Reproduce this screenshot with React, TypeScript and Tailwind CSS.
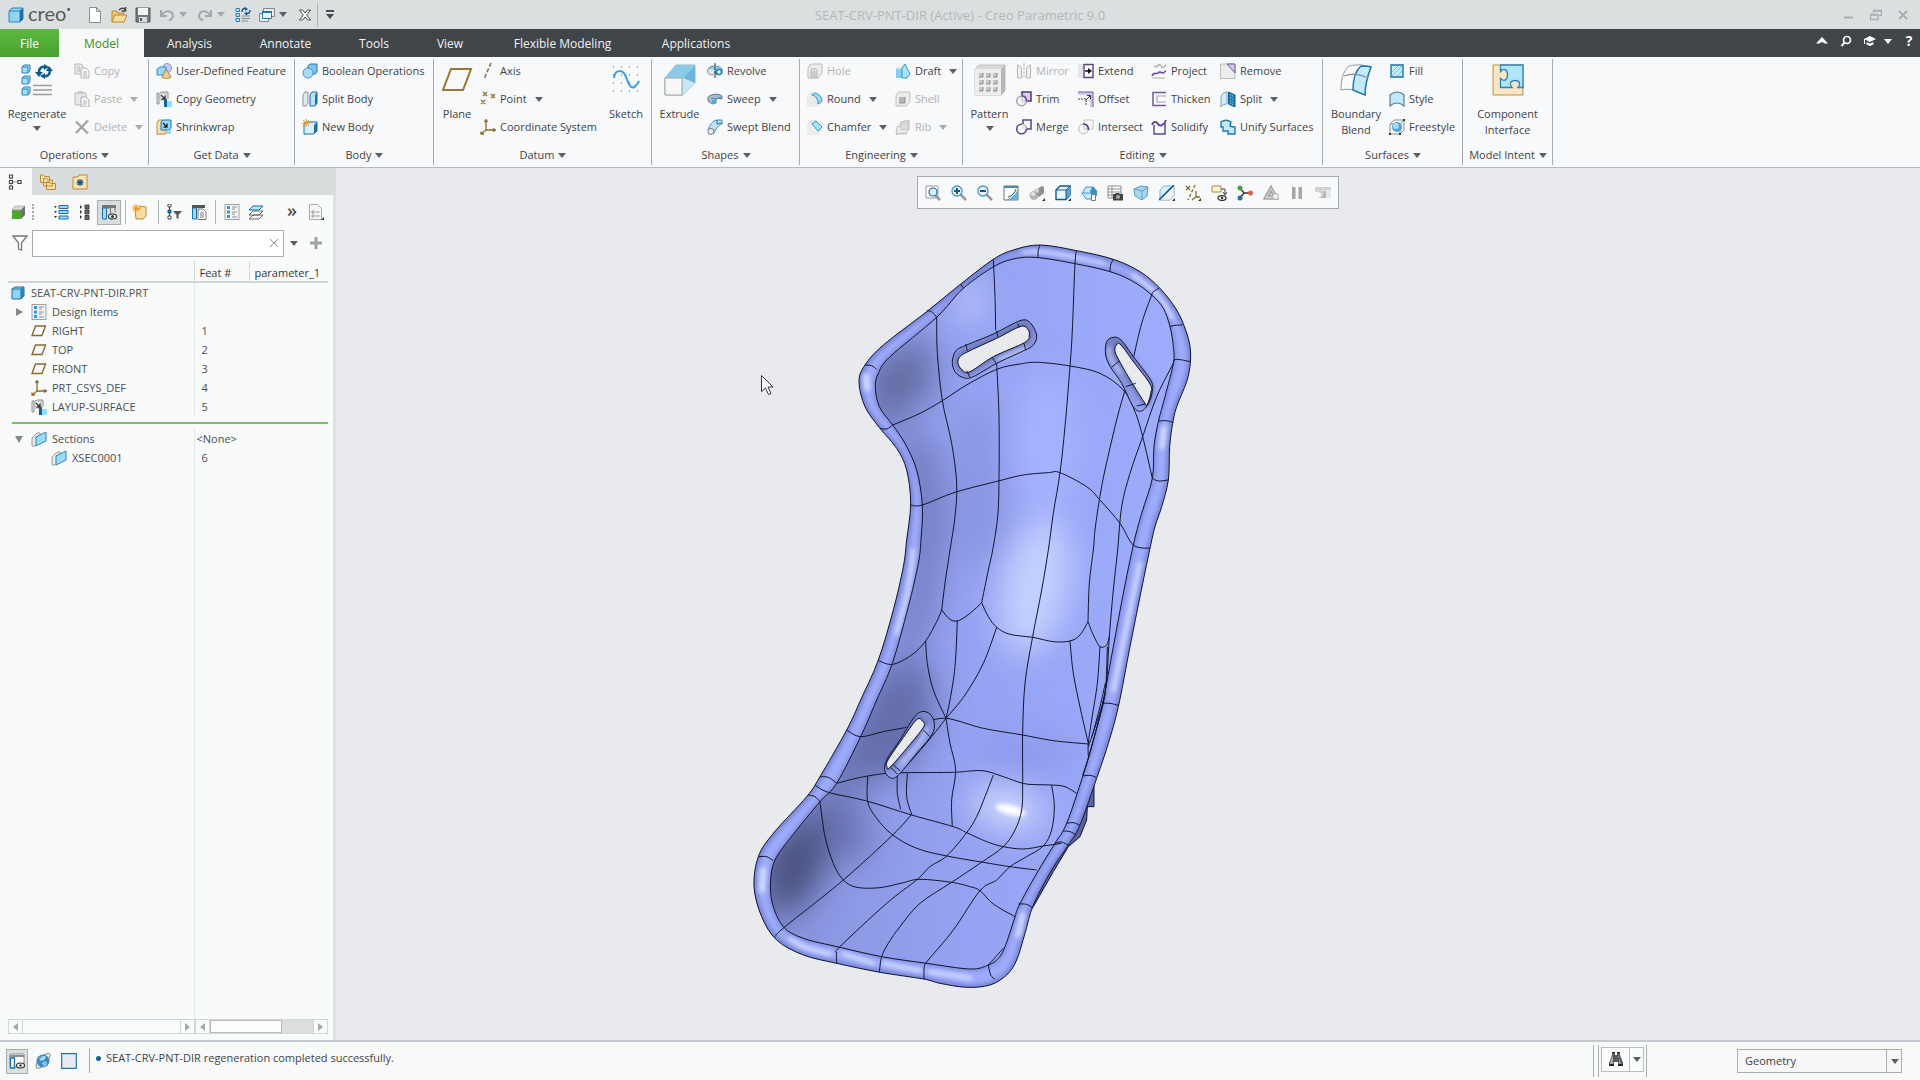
import { ReactNode, useState } from "react";
import clsx from "clsx";

/* ---------- icons, 16x16 grid ---------- */

const icons: Record<string, ReactNode> = {
  logo: (
    <>
      <path d="M4 1h11v11l-3 3H1V4z" fill="#8fd3f5" stroke="#2f83b5" />
      <path d="M1 4h11v11M12 4l3-3" fill="none" stroke="#2f83b5" />
      <path d="M12 4l3-3v11l-3 3z" fill="#1d6fa5" />
    </>
  ),
  newFile: (
    <path d="M2.500.5h7l4 4v11h-11zM9.500.5v4h4" fill="#fff" stroke="#8b8f92" />
  ),
  open: (
    <>
      <path d="M1 15V4h5l1 2h6v3" fill="#f0c56c" stroke="#b98a3a" />
      <path d="M1 15l3-7h12l-3 7z" fill="#fbdc9c" stroke="#b98a3a" />
      <path d="M8 3c2-2 4-2 6-1M14.500 0v4h-4" fill="none" stroke="#444" strokeWidth="1.500" />
    </>
  ),
  save: (
    <>
      <path d="M1 1h14v14H1z" fill="#77797b" stroke="#55585a" />
      <path d="M3 1h10v7H3z" fill="#f4f4f4" />
      <path d="M4 10h8v5H4z" fill="#d9dadb" />
      <path d="M5 11h2v3H5z" fill="#55585a" />
    </>
  ),
  undo: (
    <path d="M2 3v6h6M2.500 8.500C5 4 10 3 12.500 5.500s2 6-2.500 8" fill="none" stroke="#a3a7a9" strokeWidth="2" />
  ),
  redo: (
    <path d="M14 3v6H8M13.500 8.500C11 4 6 3 3.500 5.500s-2 6 2.500 8" fill="none" stroke="#a3a7a9" strokeWidth="2" />
  ),
  regen: (
    <>
      <path d="M1 1.500h3.500v3H1zM1 6.500h3.500v3H1zM1 11.500h3.500v3H1z" fill="#aee0f8" stroke="#2f83b5" />
      <path d="M6.500 11.500H15M6.500 14H13M6.500 9H15" stroke="#8a8d90" />
      <path d="M7 5c0-3 2-4 4-3.500M15 3c0 3-2 4-4 3.500" fill="none" stroke="#125a8c" strokeWidth="1.500" />
      <path d="M10 0l3 2-3 2zM12 4.500l-3 2 3 2z" fill="#125a8c" />
    </>
  ),
  windows: (
    <>
      <path d="M4.500 1.500h11v8h-11zM.5 6.500h9v8h-9z" fill="#e8eef2" stroke="#7f8990" />
      <path d="M3.500 4.500h9v7h-9z" fill="#e6f6fd" stroke="#2277ad" />
      <path d="M3 4h10v2H3z" fill="#2277ad" />
    </>
  ),
  closeWin: (
    <path d="M2.500 3h3L8 6l2.500-3h3L9.700 8l3.800 5h-3L8 10l-2.500 3h-3l3.800-5z" fill="#fff" stroke="#4a4d50" />
  ),
  copy: (
    <>
      <path d="M1 1h6l2 2v8H1z" fill="#e9e9ea" stroke="#b5b7b9" />
      <path d="M7 5h5l3 3v7H7z" fill="#f4f4f5" stroke="#b5b7b9" />
      <path d="M3 4h3M3 6h3M3 8h3M9 9h4M9 11h4M9 13h4" stroke="#b5b7b9" />
    </>
  ),
  paste: (
    <>
      <path d="M1 2h11v12H1z" fill="#e9e9ea" stroke="#b5b7b9" />
      <path d="M4 0h5v3H4z" fill="#c6c8ca" />
      <path d="M7 6h5l3 3v7H7z" fill="#f7f7f8" stroke="#aaacae" />
      <path d="M9 10h4M9 12h4M9 14h3" stroke="#b5b7b9" />
    </>
  ),
  del: <path d="M2 2.500l12 12M14 1.500L2 14" stroke="#a2a4a6" strokeWidth="2.400" />,
  udf: (
    <>
      <circle cx="11" cy="5" r="4.500" fill="#c7cdf5" stroke="#8790c9" />
      <path d="M1 6l3-2h6v8H1z" fill="#9ad8f7" stroke="#3b90c0" />
      <path d="M10 6l5 8c-2 2-7 2-9 0z" fill="#eecb95" stroke="#a9813f" />
    </>
  ),
  copyGeom: (
    <>
      <path d="M1 13V2h2v11zM4 2l2-1h6v7" fill="#e9eaeb" stroke="#8c8f91" />
      <path d="M4 2h6v7H4z" fill="#f4f5f5" stroke="#b0b3b5" />
      <path d="M5 4l4 4M9 4.500V8H5.500" stroke="#333" strokeWidth="1.300" fill="none" />
      <path d="M8 10h8v6H8z" fill="#8fdcfb" />
      <path d="M8 8h3v8H8z" fill="#155f93" />
    </>
  ),
  shrinkwrap: (
    <>
      <path d="M1 15V3l2-2h4v14z" fill="#f7dfab" stroke="#c09546" />
      <path d="M1 15h9v-5" fill="#f7dfab" stroke="#c09546" />
      <path d="M5 3l2-2h8v8l-2 2H5z" fill="#9ad8f7" stroke="#2277ad" />
      <path d="M7 4l4 4M11 4.500V8H7.500" stroke="#222" strokeWidth="1.300" fill="none" />
      <path d="M11 11h4v4h-4z" fill="#8fdcfb" />
    </>
  ),
  boolean: (
    <>
      <path d="M6 3l2-2h7v8l-2 2H6z" fill="#7cc4ea" stroke="#2277ad" />
      <circle cx="6" cy="10" r="5" fill="#a9dcf5" stroke="#4a95bf" />
    </>
  ),
  splitBody: (
    <>
      <path d="M1 4l2-3h3v11l-2 3H1z" fill="#e3e7ea" stroke="#8c9499" />
      <path d="M8 4l2-3h5v11l-2 3H8z" fill="#b4e3fa" stroke="#1d6fa5" />
      <path d="M13 4l2-3v11l-2 3z" fill="#1d6fa5" />
    </>
  ),
  newBody: (
    <>
      <path d="M2 5l2-2h11v9l-3 3H2z" fill="#d9f1fc" stroke="#1d6fa5" />
      <path d="M12 6l3-3v9l-3 3z" fill="#1d6fa5" />
      <path d="M4 0v8M0 4h8M1 1l6 6M7 1L1 7" stroke="#f0920f" />
    </>
  ),
  axis: <path d="M11 0L4 16" stroke="#8a6a30" strokeWidth="1.500" strokeDasharray="4 2" />,
  point: (
    <path d="M3 1l4 4M7 1L3 5M11 3l4 4M15 3l-4 4M1 9l4 4M5 9l-4 4" stroke="#96753a" strokeWidth="1.500" />
  ),
  csys: (
    <path d="M6 1v10h9M6 11l-5 4M4.500 3L6 .5 7.500 3M13 9.500l2.500 1.500-2.500 1.500M1 12.500V15h3" fill="none" stroke="#8a6a30" strokeWidth="1.300" />
  ),
  revolve: (
    <>
      <ellipse cx="5" cy="8" rx="4.500" ry="4" fill="#e3e7ea" stroke="#8c9499" />
      <path d="M1 6c3-4 11-4 14 0v4c-3 2-5 2-7 1V7" fill="#8fcdee" stroke="#3b90c0" />
      <circle cx="12" cy="9" r="2.500" fill="#fff" stroke="#2277ad" strokeWidth="1.400" />
      <path d="M8 0v16" stroke="#333" strokeDasharray="3 1" />
    </>
  ),
  sweep: (
    <>
      <path d="M1 6c3-3 11-4 14-1v3c-3-1-5-1-6 0v4l-4 1-4-3z" fill="#a5bccb" stroke="#5e7f93" />
      <path d="M4 7l5 1 5-2" fill="none" stroke="#3b90c0" />
      <path d="M5 9h4v4H5z" fill="#5aa5cf" />
    </>
  ),
  sweptBlend: (
    <>
      <path d="M1 11C3 6 5 2 10 1h5v4c-4 1-6 5-8 9z" fill="#bfe3f5" stroke="#4d87a8" />
      <circle cx="4" cy="12.500" r="3" fill="#e8eaeb" stroke="#777" />
      <path d="M10 1v4l5-1" fill="none" stroke="#2277ad" />
    </>
  ),
  hole: (
    <>
      <path d="M1 5l3-4h11v9l-4 5H1z" fill="#ececed" stroke="#b9bbbd" />
      <path d="M4 15V8c0-3 6-3 6 0v7M6 15V9c0-1 2-1 2 0v6" fill="none" stroke="#aaacae" />
    </>
  ),
  round: (
    <>
      <path d="M1 3l3-2c7 0 11 3 11 9l-4 5c0-7-3-10-8-10z" fill="#e1e3e5" />
      <path d="M0 5h6c4 0 5 3 5 6v5H0z" fill="#ececed" />
      <path d="M5 4l3-2c4 1 7 4 7 8l-4 3c0-5-2-8-6-9z" fill="#9bdcfa" stroke="#3b90c0" />
    </>
  ),
  chamfer: (
    <>
      <path d="M1 4l3-3h5l6 6v5l-4 3z" fill="#e1e3e5" />
      <path d="M0 5h6l5 5v6H0z" fill="#ececed" />
      <path d="M5 5l4-3 6 6-4 4z" fill="#a8e4fb" stroke="#3b90c0" />
    </>
  ),
  draft: (
    <>
      <path d="M1 4h6l2-3 6 9-3 5H1z" fill="#dfe9ee" />
      <path d="M1 6h6v9H1z" fill="#86cdf0" />
      <path d="M7 5l3-4 5 10-3 4H7z" fill="#a8e4fb" stroke="#3b90c0" />
    </>
  ),
  shell: (
    <>
      <path d="M1 4l3-3h11v10l-4 4H1z" fill="#ececed" stroke="#c0c2c4" />
      <path d="M4 6h6v6H4z" fill="#b2b4b6" />
      <path d="M4 12h6V6" stroke="#8f9193" fill="none" />
    </>
  ),
  rib: (
    <>
      <path d="M1 15l1-7 3-1 1-4 8-2v9l-3 4z" fill="#ececed" stroke="#b9bbbd" />
      <path d="M5 5l8-2v7l-7 1zM1 15h11" fill="#d9dadb" stroke="#b9bbbd" strokeDasharray="2 1" />
    </>
  ),
  mirror: (
    <>
      <path d="M1.500 2c3 1 4 3 4 6v7h-4zM14.500 2c-3 1-4 3-4 6v7h4z" fill="#f0f0f1" stroke="#b2b4b6" />
      <path d="M8 0v16" stroke="#b2b4b6" strokeDasharray="3 1" />
    </>
  ),
  trim: (
    <>
      <path d="M6 1h9v9H6z" fill="#ddcffa" stroke="#4f3a78" strokeWidth="1.500" />
      <circle cx="5.500" cy="10" r="4.800" fill="#f3f3f4cc" stroke="#9a9c9e" strokeWidth="1.300" />
      <path d="M6 5c3 0 4.500 2 4.500 5" fill="none" stroke="#6c4aa3" strokeWidth="1.500" />
    </>
  ),
  merge: (
    <>
      <path d="M7 5V1h8v9h-5" fill="none" stroke="#5a4385" strokeWidth="1.500" />
      <circle cx="5.500" cy="10" r="4.800" fill="none" stroke="#5a4385" strokeWidth="1.500" />
      <path d="M6 5c3 0 4.500 2 4.500 5H6z" fill="#e5e5e7" />
    </>
  ),
  intersect: (
    <>
      <path d="M6 1h9v9H6z" fill="none" stroke="#c0c2c4" />
      <circle cx="5.500" cy="10" r="4.800" fill="none" stroke="#b2b4b6" />
      <path d="M5 5c4 0 5.500 2.500 5.500 6" fill="none" stroke="#4b3a86" strokeWidth="1.600" />
    </>
  ),
  extend: (
    <>
      <path d="M0 1h6v14H0z" fill="#e6e6e8" />
      <path d="M6 1.500h9v13H6z" fill="#fff" stroke="#5a4385" strokeWidth="1.400" />
      <path d="M7 8h4" stroke="#111" strokeWidth="1.500" />
      <path d="M10 5l4 3-4 3z" fill="#111" />
    </>
  ),
  offset: (
    <>
      <path d="M0 2.500h13.500V16" fill="none" stroke="#d3c6ec" strokeWidth="3" />
      <path d="M0 1h15v15" fill="none" stroke="#6f5a96" />
      <path d="M0 8h8v7" fill="none" stroke="#444" strokeDasharray="2 1" />
      <path d="M8 9l4-4M9 4.500h3.500V8" stroke="#333" fill="none" />
    </>
  ),
  project: (
    <>
      <path d="M3 3c3 3 5-4 7 0s3 0 5-1" fill="none" stroke="#aeb0b2" strokeWidth="1.400" />
      <path d="M1 13c2-5 4-1 6-3s4 0 5 0 2-2 3-2" fill="none" stroke="#6c4aa3" strokeWidth="1.600" />
      <path d="M1 15h13" stroke="#aeb0b2" />
    </>
  ),
  thicken: (
    <>
      <path d="M15 1.500H2v13h13" fill="none" stroke="#6f5a96" strokeWidth="1.500" />
      <path d="M15 5H6v6h9" fill="none" stroke="#a2a4a6" strokeWidth="1.200" />
    </>
  ),
  solidify: (
    <>
      <path d="M3 6v9h11V4" fill="#fff" stroke="#5a4385" strokeWidth="1.400" />
      <path d="M1 6c2-5 5-3 6-1s5 3 8-4" fill="none" stroke="#5a3f9a" strokeWidth="1.800" />
    </>
  ),
  remove: (
    <>
      <path d="M.5 1h14.500v14.500H.5z" fill="#ececed" stroke="#b9bbbd" />
      <path d="M7 1h8v9z" fill="#d6c6f2" stroke="#6f5a96" />
    </>
  ),
  split: (
    <>
      <path d="M1 5c1-2 3-4 6-4v12c-3 0-5 1-6 3z" fill="#d3ecf7" stroke="#7fa3b5" />
      <path d="M8.500 1l6.500 3v12l-6.500-3z" fill="#1d75ad" stroke="#155f93" />
      <path d="M10 3.500l4 2M10 6.500l4 2M10 9.500l4 2M10 12l4 2" stroke="#a8e4fb" strokeDasharray="1 1" />
    </>
  ),
  unify: (
    <path d="M1 3c3-2 7-2 10 0l-1 4c2 1 4 1 5 1v7h-7v-3H3V8H1z" fill="#bfeafc" stroke="#2277ad" strokeWidth="1.400" />
  ),
  fill: (
    <>
      <path d="M2 2h12v12H2z" fill="#c5ecfd" stroke="#1d6fa5" strokeWidth="1.400" />
      <path d="M3 9l6-6M3 13L13 3M8 13l5-5" stroke="#7fb9d6" />
    </>
  ),
  style: (
    <path d="M1 4c4-4 10-4 14 0v11c-4-4-10-4-14 0z" fill="#bfeafc" stroke="#5d7f91" strokeWidth="1.200" />
  ),
  freestyle: (
    <>
      <path d="M1 5l4-4h10v10l-4 4H1zM1 5h10v10M11 5l4-4" fill="none" stroke="#8b8f92" />
      <circle cx="8" cy="8" r="5" fill="#4aa6db" />
      <circle cx="7" cy="7" r="3" fill="#a8dcf7" />
      <path d="M0 14h2v2H0zM14 0h2v2h-2zM10 14h2v2h-2z" fill="#333" />
    </>
  ),
  tree: (
    <>
      <path d="M1.500 1h3v3h-3zM1.500 6.500h3v3h-3zM1.500 12h3v3h-3zM10 6.500h3v3h-3z" fill="#fff" stroke="#444" strokeWidth="1.200" />
      <path d="M3 4v2.500M3 9.500V12M4.500 8H10" stroke="#444" strokeDasharray="1 1" />
    </>
  ),
  folders: (
    <path d="M.5 1h3l1 1.500h5v6h-9zM3.500 4.500h3L7.500 6h5v6h-9zM6.500 8h3l1 1.500h5v6h-9z" fill="#fbe0a8" stroke="#b98a3a" />
  ),
  favorites: (
    <>
      <path d="M1 3h5l1-2h8v14H1z" fill="#fbe3b3" stroke="#b98a3a" />
      <path d="M8 5v7M4.500 8.500h7M5.500 6l5 5M10.500 6l-5 5" stroke="#125a8c" strokeWidth="1.300" />
    </>
  ),
  greenCube: (
    <>
      <path d="M2 6h9v9H2z" fill="#4fa62f" />
      <path d="M2 6l3-4h10l-4 4z" fill="#d6d8d9" stroke="#999" strokeWidth=".6" />
      <path d="M11 6l4-4v9l-4 4z" fill="#6e7174" />
    </>
  ),
  listWide: (
    <>
      <path d="M6 1.500h9v3H6zM6 6.500h9v3H6zM6 12h9v3H6z" fill="#9adcfa" stroke="#1d6fa5" />
      <path d="M1 2h3l-1.500 2zM1 7h3L2.500 9zM1 12h3l-1.500 2z" fill="#333" />
    </>
  ),
  listNarrow: (
    <>
      <path d="M8 1h4v4H8zM8 6h4v4H8zM8 11.500h4v4H8z" fill="#66696c" stroke="#444" />
      <path d="M3 1l2 2-2 2zM3 6l2 2-2 2zM3 11l2 2-2 2z" fill="#333" />
    </>
  ),
  columnsEye: (
    <>
      <path d="M1 1h14v3H1z" fill="#777" />
      <path d="M1.500 4h4v11h-4z" fill="#9adcfa" stroke="#1d6fa5" />
      <path d="M5.500 4h4v11M14 4v4" fill="none" stroke="#777" />
      <ellipse cx="11.500" cy="12.500" rx="4" ry="2.500" fill="#fff" stroke="#333" strokeWidth="1.200" />
      <circle cx="11.500" cy="12.500" r="1.500" fill="#333" />
    </>
  ),
  newPart: (
    <>
      <path d="M3 5h5V2l6 1v9l-3 3H4z" fill="#fbdc9c" stroke="#b98a3a" />
      <path d="M4 0v8M0 4h8M1 1l6 6M7 1L1 7" stroke="#f0920f" />
    </>
  ),
  treeFilter: (
    <>
      <path d="M1 0h3v3H1zM1 12h3v3H1z" fill="#fff" stroke="#444" />
      <path d="M1 6h3v3H1z" fill="#1d6fa5" stroke="#155f93" />
      <path d="M2.500 3v3M2.500 9v3" stroke="#444" />
      <path d="M6 7h9l-3.500 4v4l-2-1v-3z" fill="#555" />
    </>
  ),
  columnsDoc: (
    <>
      <path d="M1 1h13v3H1z" fill="#555" />
      <path d="M1.500 4h4v11h-4z" fill="#9adcfa" stroke="#1d6fa5" />
      <path d="M7 5h5l3 3v7.500H7z" fill="#fff" stroke="#777" />
      <path d="M9 9h4M9 11h4M9 13h4" stroke="#777" />
    </>
  ),
  designItems: (
    <>
      <path d="M1 .5h14v15H1z" fill="#f3f6f8" stroke="#9aa0a4" />
      <path d="M3 2h3v3H3zM3 6.500h3v3H3zM3 11h3v3H3z" fill="#2f9ad6" />
      <path d="M8 3h5M8 5h3M8 8h5M8 10h3M8 13h5" stroke="#8a8d90" />
    </>
  ),
  layers: (
    <>
      <path d="M1 15l4-4h10l-4 4zM1 11l4-4h10l-4 4z" fill="#fff" stroke="#666" />
      <path d="M1 6l4-4h10l-4 4z" fill="#b8e6fa" stroke="#1d6fa5" />
    </>
  ),
  docList: (
    <>
      <path d="M1.500.5h8l4 4v11h-12z" fill="#f5f6f7" stroke="#a8abae" />
      <path d="M4 7h2v2H4zM4 11h2v2H4z" fill="none" stroke="#999" />
      <path d="M7.500 8h4M7.500 12h4" stroke="#999" />
      <path d="M16 13v3h-3z" fill="#333" />
    </>
  ),
  funnel: (
    <path d="M1 1h14l-5.500 7v7l-3-1V8z" fill="#fff" stroke="#777" strokeWidth="1.300" />
  ),
  part: (
    <>
      <path d="M2 4l3-2h9v9l-3 3H2z" fill="#8fd3f5" stroke="#1d6fa5" />
      <path d="M2 4h9v10M11 4l3-2" fill="none" stroke="#1d6fa5" />
      <path d="M11 4l3-2v9l-3 3z" fill="#2f83b5" />
    </>
  ),
  plane: <path d="M4.500 3h10L11 12.500H1z" fill="none" stroke="#8a6a30" strokeWidth="1.400" />,
  section: (
    <>
      <path d="M1 7l5-5h3v9l-5 4H1z" fill="#e9eaeb" stroke="#9a9c9e" />
      <path d="M5 6l10-5v9L5 15z" fill="#9bdcfa" stroke="#2f83b5" />
    </>
  ),
  refit: (
    <>
      <path d="M1 1h12v12H1z" fill="#fff" stroke="#9a9c9e" />
      <path d="M10 10l5 5" stroke="#999" strokeWidth="2.500" />
      <circle cx="8" cy="7" r="4" fill="#dff3fc" stroke="#1d6fa5" strokeWidth="1.200" />
    </>
  ),
  zoomIn: (
    <>
      <path d="M9 9l6 6" stroke="#999" strokeWidth="2.500" />
      <circle cx="6" cy="6" r="5" fill="#e6f6fd" stroke="#4a95bf" strokeWidth="1.300" />
      <path d="M3 6h6M6 3v6" stroke="#125a8c" strokeWidth="2" />
    </>
  ),
  zoomOut: (
    <>
      <path d="M9 9l6 6" stroke="#999" strokeWidth="2.500" />
      <circle cx="6" cy="6" r="5" fill="#e6f6fd" stroke="#4a95bf" strokeWidth="1.300" />
      <path d="M3 6h6" stroke="#125a8c" strokeWidth="2" />
    </>
  ),
  repaint: (
    <>
      <path d="M1 1h14v14H1z" fill="#fff" stroke="#777" />
      <path d="M15 3v12H1c7-1 12-5 14-12z" fill="#5fb2dc" />
      <path d="M1 1h14v2H1z" fill="#4a88a8" />
      <path d="M5 12c4-1 7-4 8-8" fill="none" stroke="#2b4a5a" />
    </>
  ),
  shading: (
    <>
      <circle cx="5" cy="10.500" r="4.500" fill="#b4b6b8" />
      <circle cx="4" cy="9" r="2" fill="#e3e4e5" />
      <path d="M8 4l5-3 2 1v6l-5 4-2-2z" fill="#8d8f91" />
      <path d="M5 4h5v5c-1-2-3-3-5-3z" fill="#d0d1d2" />
      <path d="M16 13v3h-3z" fill="#333" />
    </>
  ),
  display: (
    <>
      <path d="M1 5l4-4h10v9l-4 4.500H1z" fill="#e9f7fd" stroke="#125a8c" strokeWidth="1.400" />
      <path d="M11 5l4-4v9l-4 4.500z" fill="#5aa5cf" />
      <path d="M1 5h10v9.500M11 5l4-4" fill="none" stroke="#125a8c" />
      <path d="M16 13v3h-3z" fill="#333" />
    </>
  ),
  orient: (
    <>
      <path d="M1 8l4-6h6l4 6-4 6H5z" fill="#c5ebfb" stroke="#4a95bf" />
      <path d="M9 6l3-5 4 5v5h-5z" fill="#3b90c0" />
      <path d="M1 8h10" stroke="#4a95bf" />
      <path d="M10.500 9.500h4v6h-4z" fill="#fff" stroke="#777" />
    </>
  ),
  viewMgr: (
    <>
      <path d="M1 1h13v12H1zM1 4h13M1 7h13M1 10h13M5 1v12" fill="#fff" stroke="#8b8f92" />
      <path d="M6 9h2l1-1h3l1 1h3v6.500H6z" fill="#444" />
      <circle cx="11" cy="12" r="2" fill="#aaa" />
    </>
  ),
  perspective: (
    <>
      <path d="M1 4l7-3 7 1-1 9-5 4-7-4z" fill="#a8d8ef" stroke="#5f9dbd" />
      <path d="M1 4l8 2 6-4M9 6v9" fill="none" stroke="#5f9dbd" />
    </>
  ),
  sectionView: (
    <>
      <path d="M1 5l4-4h10v9l-4 5H1z" fill="#d8f0fb" stroke="#7fb9d6" />
      <path d="M1 15L15 1v9l-4 5z" fill="#f1f2f3" stroke="#aaa" strokeDasharray="1 1" />
      <path d="M0 15L15 0" stroke="#155f93" strokeWidth="1.600" />
      <path d="M16 13v3h-3z" fill="#333" />
    </>
  ),
  datumDisplay: (
    <>
      <path d="M1 1l4 4M5 1L1 5M11 6v6h4M11 12l-4 3" stroke="#8a6a30" strokeWidth="1.300" fill="none" />
      <path d="M10 0L3 15" stroke="#8a6a30" strokeWidth="1.400" strokeDasharray="3 2" />
      <path d="M16 13v3h-3z" fill="#333" />
    </>
  ),
  annotation: (
    <>
      <path d="M1 1h9v6H1z" fill="#fdf3d8" stroke="#b98a3a" />
      <path d="M10 4h4v5M12 7l2 3 2-3" fill="none" stroke="#444" />
      <ellipse cx="11" cy="13" rx="4" ry="2.400" fill="#fff" stroke="#333" strokeWidth="1.300" />
      <circle cx="11" cy="13" r="1.300" fill="#333" />
    </>
  ),
  spin: (
    <>
      <path d="M3 3l4 5-4 5M7 8h6" fill="none" stroke="#333" strokeWidth="1.300" />
      <circle cx="3" cy="3" r="2.500" fill="#4a9a45" />
      <circle cx="3" cy="13" r="2.500" fill="#2d6f95" />
      <circle cx="13.500" cy="8" r="2.500" fill="#dd5f50" />
    </>
  ),
  sim: (
    <>
      <path d="M8 1l7 13H1zM8 6l2.500 5h-5z" fill="#d9dadb" stroke="#a2a4a6" strokeWidth="1.500" />
      <circle cx="12.500" cy="11.500" r="3" fill="#eee" stroke="#aaa" />
    </>
  ),
  pause: <path d="M3 2h3.500v12H3zM9.500 2H13v12H9.500z" fill="#a5a7a9" />,
  simEnd: (
    <>
      <path d="M0 2h16v11H2c5-1 6-5 1-6H0z" fill="#cfd1d2" />
      <path d="M7 5h9v8H5c3-2 4-5 2-8z" fill="#e6e7e8" />
      <path d="M8 6c1 3 0 6-3 7h6V6z" fill="#b4b6b8" />
    </>
  ),
  navigator: (
    <>
      <path d="M1 1h14v13H1z" fill="#fff" stroke="#8b8f92" />
      <path d="M1 3h14" stroke="#8b8f92" strokeWidth="2" />
      <path d="M1.500 5h4v10h-4z" fill="#fff" stroke="#1d6fa5" strokeWidth="1.300" />
      <ellipse cx="11.500" cy="12.500" rx="4" ry="2.500" fill="#fff" stroke="#333" strokeWidth="1.200" />
      <circle cx="11.500" cy="12.500" r="1.300" fill="#333" />
    </>
  ),
  globe: (
    <>
      <circle cx="8" cy="8" r="6.500" fill="#2f8fd0" />
      <path d="M4 5c3-3 6-2 7-1l-2 3-4 1zM7 10l4-2 1 3-3 3z" fill="#aadcf6" />
      <path d="M2 15C-1 12 4 5 9 2s7-1 6 1-4 8-9 11-4 1-4 1z" fill="none" stroke="#777" />
    </>
  ),
  blank: (
    <path d="M.7.7h14.600v14.600H.7z" fill="#e6eaf2" stroke="#2277ad" strokeWidth="1.200" />
  ),
  binoculars: (
    <>
      <path d="M4 1h3v3h2V1h3v3l3 8v3h-5v-4H6v4H1v-3l3-8z" fill="#55585a" />
      <path d="M3 8l2-3v8H2zM10 5l1 0v8h2z" fill="#aaacae" />
      <path d="M1 13h5v2H1zM10 13h5v2h-5zM4 1h3v1H4zM9 1h3v1H9z" fill="#222" />
    </>
  ),
};

/* ---------- large ribbon icons, 32x32 grid ---------- */

const bigIcons: Record<string, ReactNode> = {
  regenerate: (
    <>
      {[1, 12, 23].map((y) => (
        <g key={y}>
          <path d={`M1 ${y + 2}l2-2h6v6l-2 2H1z`} fill="#a9def8" stroke="#2f83b5" />
          <path d={`M1 ${y + 2}h6v6`} fill="none" stroke="#2f83b5" />
        </g>
      ))}
      <path d="M12 21.500h19M12 26h19M12 30.500h19" stroke="#9a9c9e" strokeWidth="1.500" />
      <path d="M18 8c0-4 3-6 7-5M29 6c0 5-3 7-7 6" fill="none" stroke="#125a8c" strokeWidth="2.600" />
      <path d="M14 8h8l-4 5zM32 7h-7l3-5z" fill="#125a8c" />
      <path d="M23 0l5 3-5 3zM24 9l-5 3 5 3z" fill="#125a8c" />
    </>
  ),
  plane: <path d="M10 5h20l-8 21H2z" fill="none" stroke="#9a7536" strokeWidth="2" />,
  sketch: (
    <>
      {[3, 11, 19, 27].map((y) => (
        <path key={y} d={`M3 ${y}h27`} stroke="#555" strokeDasharray="1 7" />
      ))}
      <path d="M4 14c1-9 9-9 12-1s6 17 13 4" fill="none" stroke="#3aa0dc" strokeWidth="2" />
    </>
  ),
  extrude: (
    <>
      <path d="M1 14L12 1h19v18L19 31H1z" fill="#b4d9ea" stroke="#9fb5bf" />
      <path d="M12 1h19L19 14H1z" fill="#8ccbe8" />
      <path d="M19 14L31 1v18L19 31z" fill="#c8e8f6" />
      <path d="M31 1v18l-12-5z" fill="#6fb7da" />
      <path d="M1 14h17v17H1z" fill="#f7f7f7" stroke="#a5a7a9" />
    </>
  ),
  pattern: (
    <>
      <path d="M1 5l4-4h26v26l-4 4H1z" fill="#d9dadb" stroke="#c0c2c4" />
      <path d="M27 5l4-4v26l-4 4z" fill="#b5b7b9" />
      <path d="M1 5h26v26H1z" fill="#ededee" />
      {[9, 16, 23].map((y) => (
        <path key={y} d={`M5 ${y}h4v4H5zM12 ${y}h4v4h-4zM19 ${y}h4v4h-4z`} fill="#c3c5c7" />
      ))}
      {[9, 16, 23].map((y) => (
        <path key={y} d={`M9 ${y}v4H5M16 ${y}v4h-4M23 ${y}v4h-4`} fill="none" stroke="#8c8e90" />
      ))}
    </>
  ),
  boundary: (
    <>
      <path d="M1 26C1 16 3 7 9 2c8-2 15-1 22 1-3 8-6 18-6 28-8-5-16-7-24-5z" fill="#fbfbfc" stroke="#999b9d" />
      <path d="M21 2c4 0 7 0 10 1-3 8-6 18-6 28l-12-5C13 15 15 7 21 2z" fill="#c2eafb" stroke="#2277ad" strokeWidth="1.500" />
      <path d="M4 12c8-3 16-2 24 2" fill="none" stroke="#8b9ba5" strokeWidth="1.300" />
    </>
  ),
  component: (
    <>
      <path d="M1 1h30v30H1z" fill="#fbe6c3" stroke="#bf8f47" />
      <path d="M8.500 1H31v22.500h-5c3-3 2-7-3-7s-6 4-3 7H8.500v-9c4 4 7 1 7-4s-4-7-7-3z" fill="#b0e5fb" stroke="#2f83b5" strokeWidth="1.300" />
    </>
  ),
};

function Icon({ name }: { name: string }) {
  return (
    <svg viewBox="0 0 16 16" className="size-4 shrink-0" aria-hidden="true">
      {icons[name]}
    </svg>
  );
}

function Caret({ className = "text-[#5d6063]" }: { className?: string }) {
  return (
    <svg viewBox="0 0 8 5" className={clsx("h-[5px] w-2 shrink-0", className)} aria-hidden="true">
      <path d="M0 0h8L4 5z" fill="currentColor" />
    </svg>
  );
}

/* ---------- ribbon ---------- */

type TItem = { label: string; icon: string; menu?: boolean; off?: boolean };

function ToolItem({ label, icon, menu, off }: TItem) {
  return (
    <button
      disabled={off}
      className={clsx(
        "flex h-7 items-center gap-1 whitespace-nowrap",
        off ? "text-[#b0b2b4]" : "text-[#3f4346]",
      )}
    >
      <Icon name={icon} />
      <span>{label}</span>
      {menu && (
        <span className="ml-1">
          <Caret className={off ? "text-[#a9abad]" : "text-[#5d6063]"} />
        </span>
      )}
    </button>
  );
}

function Column({ items, className }: { items: TItem[]; className?: string }) {
  return (
    <div className={clsx("flex shrink-0 flex-col", className)}>
      {items.map((item) => (
        <ToolItem key={item.label} {...item} />
      ))}
    </div>
  );
}

function BigTool({
  icon,
  lines,
  menu,
  className,
}: {
  icon: string;
  lines: string[];
  menu?: boolean;
  className: string;
}) {
  return (
    <button
      className={clsx("flex shrink-0 flex-col items-center pt-[7px] leading-4 text-[#3f4346]", className)}
    >
      <svg viewBox="0 0 32 32" className="mb-[10px] size-8" aria-hidden="true">
        {bigIcons[icon]}
      </svg>
      {lines.map((l) => (
        <span key={l} className="whitespace-nowrap">
          {l}
        </span>
      ))}
      {menu && (
        <span className="mt-1">
          <Caret />
        </span>
      )}
    </button>
  );
}

function Group({
  title,
  className,
  inset,
  children,
}: {
  title: string;
  className: string;
  inset?: boolean;
  children: ReactNode;
}) {
  return (
    <section className={clsx("relative flex shrink-0 flex-col", className)}>
      <div className={clsx("flex h-21", inset && "pl-[7px]")}>{children}</div>
      <button className="flex h-[26px] items-center justify-center gap-1 pt-0.5 whitespace-nowrap text-[#3f4346]">
        {title}
        <Caret />
      </button>
      <span className="absolute top-0.5 right-0 bottom-0.5 w-px bg-[#a9acaf]" />
    </section>
  );
}

function Ribbon() {
  return (
    <div className="flex h-[111px] shrink-0 overflow-hidden border-b border-[#b4b9be] bg-[#f8f9fb]">
      <Group title="Operations" className="w-[149px]">
        <BigTool icon="regenerate" lines={["Regenerate"]} menu className="w-[74px]" />
        <Column
          items={[
            { label: "Copy", icon: "copy", off: true },
            { label: "Paste", icon: "paste", off: true, menu: true },
            { label: "Delete", icon: "del", off: true, menu: true },
          ]}
        />
      </Group>
      <Group title="Get Data" inset className="w-[146px]">
        <Column
          items={[
            { label: "User-Defined Feature", icon: "udf" },
            { label: "Copy Geometry", icon: "copyGeom" },
            { label: "Shrinkwrap", icon: "shrinkwrap" },
          ]}
        />
      </Group>
      <Group title="Body" inset className="w-[139px]">
        <Column
          items={[
            { label: "Boolean Operations", icon: "boolean" },
            { label: "Split Body", icon: "splitBody" },
            { label: "New Body", icon: "newBody" },
          ]}
        />
      </Group>
      <Group title="Datum" className="w-[218px]">
        <BigTool icon="plane" lines={["Plane"]} className="w-[46px]" />
        <Column
          className="w-[122px]"
          items={[
            { label: "Axis", icon: "axis" },
            { label: "Point", icon: "point", menu: true },
            { label: "Coordinate System", icon: "csys" },
          ]}
        />
        <BigTool icon="sketch" lines={["Sketch"]} className="w-[48px]" />
      </Group>
      <Group title="Shapes" className="w-[148px]">
        <BigTool icon="extrude" lines={["Extrude"]} className="w-[55px]" />
        <Column
          items={[
            { label: "Revolve", icon: "revolve" },
            { label: "Sweep", icon: "sweep", menu: true },
            { label: "Swept Blend", icon: "sweptBlend" },
          ]}
        />
      </Group>
      <Group title="Engineering" inset className="w-[163px]">
        <Column
          className="w-[88px]"
          items={[
            { label: "Hole", icon: "hole", off: true },
            { label: "Round", icon: "round", menu: true },
            { label: "Chamfer", icon: "chamfer", menu: true },
          ]}
        />
        <Column
          items={[
            { label: "Draft", icon: "draft", menu: true },
            { label: "Shell", icon: "shell", off: true },
            { label: "Rib", icon: "rib", off: true, menu: true },
          ]}
        />
      </Group>
      <Group title="Editing" className="w-[360px]">
        <BigTool icon="pattern" lines={["Pattern"]} menu className="w-[53px]" />
        <Column
          className="w-[62px]"
          items={[
            { label: "Mirror", icon: "mirror", off: true },
            { label: "Trim", icon: "trim" },
            { label: "Merge", icon: "merge" },
          ]}
        />
        <Column
          className="w-[73px]"
          items={[
            { label: "Extend", icon: "extend" },
            { label: "Offset", icon: "offset" },
            { label: "Intersect", icon: "intersect" },
          ]}
        />
        <Column
          className="w-[69px]"
          items={[
            { label: "Project", icon: "project" },
            { label: "Thicken", icon: "thicken" },
            { label: "Solidify", icon: "solidify" },
          ]}
        />
        <Column
          items={[
            { label: "Remove", icon: "remove" },
            { label: "Split", icon: "split", menu: true },
            { label: "Unify Surfaces", icon: "unify" },
          ]}
        />
      </Group>
      <Group title="Surfaces" className="w-[140px]">
        <BigTool icon="boundary" lines={["Boundary", "Blend"]} className="w-[66px]" />
        <Column
          items={[
            { label: "Fill", icon: "fill" },
            { label: "Style", icon: "style" },
            { label: "Freestyle", icon: "freestyle" },
          ]}
        />
      </Group>
      <Group title="Model Intent" className="w-[90px]">
        <BigTool icon="component" lines={["Component", "Interface"]} className="w-[89px]" />
      </Group>
    </div>
  );
}

/* ---------- title bar and tabs ---------- */

function QuickButton({ icon, label }: { icon: string; label: string }) {
  return (
    <button aria-label={label} className="flex w-6 justify-center">
      <Icon name={icon} />
    </button>
  );
}

function TitleBar() {
  return (
    <header className="grid h-[29px] shrink-0 grid-cols-[1fr_auto_1fr] items-center bg-[#dbdfe0]">
      <div className="flex items-center pl-2">
        <Icon name="logo" />
        <span className="ml-1 flex pb-1 font-['Lato'] text-[20px] leading-6 text-[#55595c]">
          creo
          <span className="text-[8px] leading-4">•</span>
        </span>
        <div className="ml-3 flex items-center">
          <QuickButton icon="newFile" label="New" />
          <QuickButton icon="open" label="Open" />
          <QuickButton icon="save" label="Save" />
          <QuickButton icon="undo" label="Undo" />
          <Caret className="mr-1.5 text-[#a3a7a9]" />
          <QuickButton icon="redo" label="Redo" />
          <Caret className="mr-1.5 text-[#a3a7a9]" />
          <QuickButton icon="regen" label="Regenerate" />
          <QuickButton icon="windows" label="Windows" />
          <Caret className="mr-1.5 text-[#5d6063]" />
          <QuickButton icon="closeWin" label="Close window" />
          <span className="mr-2 h-6 w-px bg-[#aeb2b4]" />
          <button aria-label="Customize toolbar" className="border-t-2 border-[#4a4d50] pt-0.5">
            <Caret className="text-[#4a4d50]" />
          </button>
        </div>
      </div>
      <h1 className="text-[13px] text-[#b3b7b9]">SEAT-CRV-PNT-DIR (Active) - Creo Parametric 9.0</h1>
      <div className="flex justify-end gap-[15px] pr-[11px]">
        <button aria-label="Minimize">
          <svg viewBox="0 0 12 12" className="size-3">
            <path d="M1 8.500h9" stroke="#a9adaf" strokeWidth="2" />
          </svg>
        </button>
        <button aria-label="Restore">
          <svg viewBox="0 0 12 12" className="size-3">
            <path d="M3.500 4V1.500h8v5H9M.5 5.500H8v5H.5zM.5 6H8M3.500 2h8" fill="none" stroke="#a9adaf" strokeWidth="1.300" />
          </svg>
        </button>
        <button aria-label="Close">
          <svg viewBox="0 0 12 12" className="size-3">
            <path d="M2 2l8 8M10 2l-8 8" stroke="#a9adaf" strokeWidth="2" />
          </svg>
        </button>
      </div>
    </header>
  );
}

const tabs = [
  { name: "File", width: "w-[59px]" },
  { name: "Model", width: "w-[85px]" },
  { name: "Analysis", width: "w-[91px]" },
  { name: "Annotate", width: "w-[101px]" },
  { name: "Tools", width: "w-[76px]" },
  { name: "View", width: "w-[76px]" },
  { name: "Flexible Modeling", width: "w-[149px]" },
  { name: "Applications", width: "w-[118px]" },
];

function TabBar() {
  const [active, setActive] = useState("Model");

  return (
    <nav className="flex h-7 shrink-0 bg-[#40454a] text-xs">
      {tabs.map((t) => (
        <button
          key={t.name}
          onClick={() => setActive(t.name)}
          className={clsx(
            "shrink-0 pt-0.5 whitespace-nowrap",
            t.width,
            t.name === "File" && "bg-linear-to-b from-[#5cb93f] to-[#4aa02f] text-white",
            t.name !== "File" && t.name === active && "bg-[#f8f9fb] text-[#3c8a24]",
            t.name !== "File" && t.name !== active && "text-[#f1f2f3]",
          )}
        >
          {t.name}
        </button>
      ))}
      <div className="ml-auto flex items-center gap-3 pr-1.5 pb-1 text-white">
        <button aria-label="Minimize ribbon">
          <svg viewBox="0 0 12 12" className="size-3">
            <path d="M0 8.500L6 2l6 6.500h-3L6 7 3 8.500z" fill="#fff" />
          </svg>
        </button>
        <button aria-label="Search">
          <svg viewBox="0 0 12 12" className="size-3">
            <circle cx="7" cy="5" r="3.500" fill="none" stroke="#fff" strokeWidth="1.700" />
            <path d="M4.500 7.500L1.500 11" stroke="#fff" strokeWidth="2" />
          </svg>
        </button>
        <button aria-label="Learning" className="flex items-center gap-2">
          <svg viewBox="0 0 12 12" className="size-3">
            <path d="M6 1l6 3-6 3-6-3zM2.500 7L6 8.500 9.500 7v2.500L6 11 2.500 9.500zM0 4h1v5H0z" fill="#fff" />
          </svg>
          <Caret className="text-white" />
        </button>
        <button aria-label="Help" className="w-2.5 text-sm leading-4 font-bold">
          ?
        </button>
      </div>
    </nav>
  );
}

/* ---------- model tree ---------- */

type TRow = {
  name: string;
  icon: string;
  feat?: string;
  indent: string;
  expander?: "open" | "closed";
};

const features: TRow[] = [
  { name: "SEAT-CRV-PNT-DIR.PRT", icon: "part", indent: "pl-[2px]" },
  { name: "Design Items", icon: "designItems", indent: "pl-[7px]", expander: "closed" },
  { name: "RIGHT", icon: "plane", feat: "1", indent: "pl-[23px]" },
  { name: "TOP", icon: "plane", feat: "2", indent: "pl-[23px]" },
  { name: "FRONT", icon: "plane", feat: "3", indent: "pl-[23px]" },
  { name: "PRT_CSYS_DEF", icon: "csys", feat: "4", indent: "pl-[23px]" },
  { name: "LAYUP-SURFACE", icon: "copyGeom", feat: "5", indent: "pl-[23px]" },
];

const sections: TRow[] = [
  { name: "Sections", icon: "section", feat: "<None>", indent: "pl-[7px]", expander: "open" },
  { name: "XSEC0001", icon: "section", feat: "6", indent: "pl-[43px]" },
];

function TreeRow({ row }: { row: TRow }) {
  return (
    <tr className="h-[19px]">
      <td className={clsx("border-r border-[#e3e6e8] p-0", row.indent)}>
        <div className="flex h-[19px] items-center whitespace-nowrap">
          {row.expander && (
            <button aria-label={`Toggle ${row.name}`} className="flex w-4">
              <svg viewBox="0 0 8 8" className="size-2">
                <path d={row.expander === "open" ? "M0 1h8L4 8z" : "M1 0l7 4-7 4z"} fill="#85888b" />
              </svg>
            </button>
          )}
          <Icon name={row.icon} />
          <span className="ml-[5px]">{row.name}</span>
        </div>
      </td>
      <td className={clsx("p-0", row.feat === "<None>" ? "pl-0.5" : "pl-[7px]")} colSpan={2}>
        {row.feat}
      </td>
    </tr>
  );
}

function PanelTool({ icon, label, className }: { icon: string; label: string; className?: string }) {
  return (
    <button aria-label={label} className={clsx("flex h-[25px] w-6 shrink-0 items-center justify-center", className)}>
      <Icon name={icon} />
    </button>
  );
}

function Divider({ className }: { className: string }) {
  return <span className={clsx("h-6 w-px shrink-0 bg-[#b4b8ba]", className)} />;
}

function ScrollBar({ className, thumb }: { className: string; thumb?: boolean }) {
  return (
    <div className={clsx("flex h-[15px] border border-[#d3d6d8] bg-[#fafbfb]", className)}>
      <button aria-label="Scroll left" className="flex w-[14px] items-center justify-center border-r border-[#d3d6d8]">
        <svg viewBox="0 0 5 8" className="h-2 w-[5px]">
          <path d="M5 0v8L0 4z" fill="#a5a8aa" />
        </svg>
      </button>
      <div className={clsx("flex-1", thumb && "bg-[#dcdede]")}>
        {thumb && <div className="h-full w-[70%] border border-[#b9bcbe] bg-[#fdfdfd]" />}
      </div>
      <button aria-label="Scroll right" className="flex w-[14px] items-center justify-center border-l border-[#d3d6d8]">
        <svg viewBox="0 0 5 8" className="h-2 w-[5px]">
          <path d="M0 0v8l5-4z" fill="#a5a8aa" />
        </svg>
      </button>
    </div>
  );
}

function ModelTree() {
  const [search, setSearch] = useState("");

  return (
    <aside className="flex w-[336px] shrink-0 flex-col border-r-[3px] border-[#e0e3e5] bg-[#f9fafa] text-[#4a4e51]">
      <div className="-mr-[3px] flex h-[27px] shrink-0 bg-[#d9dddd]">
        <button aria-label="Model Tree" className="flex w-8 items-center justify-center bg-[#f9fafa]">
          <Icon name="tree" />
        </button>
        <button aria-label="Folder Browser" className="flex w-8 items-center justify-center">
          <Icon name="folders" />
        </button>
        <button aria-label="Favorites" className="flex w-8 items-center justify-center">
          <Icon name="favorites" />
        </button>
      </div>

      <div className="flex h-[34px] shrink-0 items-center pr-[5px] pl-[6px]">
        <PanelTool icon="greenCube" label="Active model" />
        <span className="ml-0.5 h-4 border-l-2 border-dotted border-[#a5a8aa]" />
        <PanelTool icon="listWide" label="Expand all" className="ml-[15px]" />
        <PanelTool icon="listNarrow" label="Collapse all" />
        <PanelTool icon="columnsEye" label="Show columns" className="border border-[#a9adaf] bg-[#d9dddf]" />
        <Divider className="ml-1" />
        <PanelTool icon="newPart" label="New" className="ml-0.5" />
        <Divider className="ml-1.5" />
        <PanelTool icon="treeFilter" label="Tree filters" className="ml-1" />
        <PanelTool icon="columnsDoc" label="Tree columns" />
        <Divider className="ml-1" />
        <PanelTool icon="designItems" label="Design items" className="ml-1" />
        <PanelTool icon="layers" label="Layers" />
        <button aria-label="More" className="ml-auto w-6 pb-1 text-lg leading-4 font-semibold">
          »
        </button>
        <PanelTool icon="docList" label="Settings" />
      </div>

      <div className="flex h-7 shrink-0 items-center pr-[11px] pl-3">
        <Icon name="funnel" />
        <div className="relative ml-1 flex-1">
          <input
            aria-label="Filter tree"
            value={search}
            onChange={(e) => setSearch(e.target.value)}
            className="block h-[27px] w-full border border-[#a9adaf] bg-white px-2 outline-none"
          />
          <button
            aria-label="Clear filter"
            onClick={() => setSearch("")}
            className="absolute top-0 right-0 flex h-full w-5 items-center justify-center"
          >
            <svg viewBox="0 0 8 8" className="size-2">
              <path d="M0 0l8 8M8 0L0 8" stroke="#8b8f92" />
            </svg>
          </button>
        </div>
        <button aria-label="Filter options" className="ml-[6px]">
          <Caret />
        </button>
        <button aria-label="Add filter" className="ml-3">
          <svg viewBox="0 0 12 12" className="size-3">
            <path d="M6 0v12M0 6h12" stroke="#9fa2a4" strokeWidth="3" />
          </svg>
        </button>
      </div>

      <div className="mr-[5px] ml-2 grid flex-1 pt-1">
        <table className="w-full table-fixed border-collapse text-left">
          <colgroup>
            <col className="w-[186px]" />
            <col className="w-[55px]" />
            <col />
          </colgroup>
          <thead className="text-[#34383b]">
            <tr className="h-[21px] border-b-2 border-[#d3d6d8]">
              <th className="border-r border-[#d3d6d8] p-0" aria-label="Name" />
              <th className="border-r border-[#d3d6d8] p-0 pl-[5px] align-bottom font-normal">Feat #</th>
              <th className="p-0 pl-[5px] align-bottom font-normal">parameter_1</th>
            </tr>
          </thead>
          <tbody>
            {features.map((row) => (
              <TreeRow key={row.name} row={row} />
            ))}
            <tr className="h-[13px]">
              <td colSpan={3} className="p-0">
                <div className="ml-1 h-0.5 bg-[#7dbb69]" />
              </td>
            </tr>
            {sections.map((row) => (
              <TreeRow key={row.name} row={row} />
            ))}
            <tr>
              <td className="border-r border-[#e3e6e8]" />
              <td colSpan={2} />
            </tr>
          </tbody>
        </table>
      </div>
      <div className="mr-[5px] mb-[6px] ml-2 flex">
        <ScrollBar className="w-[187px]" />
        <ScrollBar className="flex-1" thumb />
      </div>
    </aside>
  );
}

/* ---------- 3D model ---------- */

// Turns "x,y x,y ..." into a smooth curve through every point.
function curve(points: string, closed = false) {
  const p = points.split(" ").map((s) => s.split(",").map(Number));
  const n = p.length;
  const at = (i: number) => (closed ? p[(i + n) % n] : p[Math.max(0, Math.min(n - 1, i))]);
  let d = `M${p[0][0]} ${p[0][1]}`;
  for (let i = 0; i < (closed ? n : n - 1); i++) {
    const [a, b, c, e] = [at(i - 1), at(i), at(i + 1), at(i + 2)];
    d += `C${b[0] + (c[0] - a[0]) / 6} ${b[1] + (c[1] - a[1]) / 6} ${c[0] - (e[0] - b[0]) / 6} ${c[1] - (e[1] - b[1]) / 6} ${c[0]} ${c[1]}`;
  }
  return closed ? d + "Z" : d;
}

const outer = curve(
  "357,455 375,405 430,345 560,245 665,160 760,88 820,60 900,45 1010,62 1120,88 1200,125 1260,175 1310,240 1337,300 1350,350 1351,400 1340,455 1310,530 1298,580 1289,650 1285,750 1265,830 1245,890 1230,955 1200,1100 1170,1250 1135,1430 1105,1540 1070,1645 1020,1785 985,1845 935,1920 880,2025 855,2110 830,2190 800,2235 750,2265 680,2272 600,2260 550,2247 420,2227 290,2200 190,2175 110,2130 65,2060 42,1970 55,1880 100,1810 200,1700 240,1640 320,1500 362,1410 415,1290 460,1140 490,1010 500,930 512,820 500,720 470,655 420,595 375,530",
  true,
);

const inner = curve(
  "406,470 415,430 450,380 590,262 670,175 765,108 830,85 895,83 1000,100 1110,125 1180,155 1235,195 1270,235 1290,290 1300,350 1300,400 1275,500 1255,575 1242,650 1237,745 1205,850 1180,945 1150,1090 1120,1250 1088,1420 1055,1550 1028,1640 980,1780 945,1840 890,1930 838,2025 822,2070 795,2150 775,2185 745,2205 690,2217 560,2200 425,2180 300,2152 190,2125 130,2090 97,2020 92,1950 105,1890 150,1825 240,1715 290,1660 362,1520 410,1410 457,1300 505,1130 535,1000 543,930 547,825 530,720 495,640 458,585 418,530",
  true,
);

const edges = [
  // upright lines of the back rest
  "760,88 765,200 767,300",
  "770,400 777,560 777,750 773,860 758,960 745,1020 725,1118",
  "1010,62 1005,100 997,300 990,410 975,590 960,728 940,850 925,960 905,1080 878,1220 855,1360 848,1510 848,1660 845,1740 825,1800 790,1850 720,1900 635,1957 540,2020 480,2090 445,2140 425,2180 418,2226",
  "590,262 592,370 607,512 635,640 650,760 645,860 630,960 615,1060 605,1140",
  "1235,195 1205,280 1180,385",
  "1155,480 1130,570 1095,720 1078,810 1065,900 1060,960 1048,1060 1044,1175",
  "1300,400 1250,500 1208,620 1170,730 1145,830 1133,960 1120,1080 1108,1220 1100,1350 1085,1430 1045,1550",
  // cross lines of the back rest
  "458,585 540,550 607,512 680,465 770,418 840,402 895,397 990,408 1080,430 1150,480 1185,545 1208,620 1237,745",
  "512,825 547,825 645,787 775,753 850,735 925,728 960,728 1040,770 1080,810 1140,880 1180,945 1230,955",
  "415,1292 458,1303 515,1275 557,1233 590,1175 605,1140",
  "605,1140 630,1168 655,1172 690,1150 725,1118",
  "725,1118 745,1160 770,1192 810,1213 878,1222 940,1235 990,1233 1020,1215 1044,1175",
  "1044,1175 1060,1215 1080,1250 1100,1245 1108,1220",
  // lumbar star
  "557,1233 562,1300 580,1380 618,1465",
  "652,1172 645,1310 630,1410 618,1465",
  "770,1192 730,1300 675,1395 618,1465",
  "618,1465 575,1520 515,1590 475,1630",
  "618,1465 630,1540 647,1620 635,1710 637,1790",
  "320,1500 362,1520 430,1505 500,1492",
  "550,1480 618,1465 730,1495 848,1515 940,1532 1045,1542",
  "990,1233 1000,1330 1022,1440 1045,1540",
  "1080,1250 1072,1360 1055,1470 1045,1540 1045,1580",
  "1102,1250 1098,1360 1090,1420 1060,1530 1040,1600 1028,1635",
  "1096,1360 1080,1430 1056,1520",
  // seat pan
  "290,1660 340,1647 383,1638 440,1630 500,1628 640,1627 690,1623 735,1623 790,1640 848,1660 890,1664 935,1665 975,1670 1010,1690",
  "383,1638 383,1715 410,1765 458,1815 530,1855 620,1878 730,1897 810,1910 890,1920",
  "472,1635 472,1690 482,1738",
  "502,1630 500,1700 515,1753",
  "515,1753 458,1815 310,1950 135,2090 105,2120",
  "225,1665 265,1687 380,1713 515,1755 640,1790 680,1808 740,1835 790,1850 850,1857 910,1848 945,1843 965,1840",
  "760,1635 735,1700 710,1760 680,1808 620,1878 570,1910 530,1950 440,2020 300,2150 290,2170 290,2200",
  "935,1665 943,1730 935,1800 910,1848 860,1880 810,1910 770,1950 720,1982 640,2100 565,2190 553,2210 552,2247",
  "240,1715 255,1820 280,1900 310,1950 350,1972 420,1973 490,1958 540,1948 635,1957 690,1970 720,1982 760,2022 825,2060",
  "745,2205 790,2155",
  // rail joints
  "55,1880 80,1880 100,1892",
  "835,2022 860,2023 880,2035",
  "980,1780 1000,1778 1020,1786",
  "970,1803 990,1805 1008,1815",
  "945,1840 965,1836 985,1846",
  "1028,1638 1050,1636 1068,1642",
  "205,1695 225,1700 240,1715",
  "240,1640 265,1642 288,1658",
  "745,2205 752,2235 765,2248",
  "895,83 894,65 900,45",
  "1110,125 1112,105 1120,88",
  "1235,195 1240,185 1257,175",
  "1290,290 1305,286 1327,285",
  "1300,400 1308,388 1352,395",
  "1257,573 1280,572 1300,578",
  "1237,745 1255,753 1285,750",
  "560,242 575,245 590,262",
  "662,162 670,175",
  "375,405 395,407 410,418",
  "420,595 440,597 458,585",
  "1088,1420 1110,1420 1135,1426",
];

const slots = [
  {
    rim: "680,345 760,312 840,272 870,278 890,315 880,345 850,363 770,400 700,440 670,443 645,425 637,395 648,362",
    hole: "690,362 770,325 840,290 862,296 868,315 853,338 760,380 690,425 667,420 654,400 660,380",
    shine: "775,389 860,352",
    ticks: ["677,342 682,362", "770,302 773,320", "833,280 838,292", "852,340 857,360", "757,382 768,400", "680,422 690,442"],
  },
  {
    rim: "1120,322 1143,330 1180,380 1232,450 1237,480 1228,515 1205,543 1180,530 1145,460 1112,412 1097,375 1100,335",
    hole: "1130,345 1143,345 1180,395 1230,462 1232,490 1222,522 1212,515 1165,440 1127,370",
    shine: "1108,350 1112,385 1145,430",
    ticks: ["1115,412 1137,393", "1157,470 1187,460", "1190,528 1215,522"],
  },
  {
    rim: "545,1445 570,1452 583,1480 575,1515 530,1570 480,1630 455,1645 435,1625 440,1590 480,1530 520,1465",
    hole: "530,1469 548,1475 550,1492 500,1555 450,1612 441,1610 444,1590 485,1530",
    shine: "562,1490 540,1535 480,1605",
    ticks: ["550,1500 570,1520", "460,1605 480,1622", "452,1612 472,1632"],
  },
];

function SeatModel() {
  return (
    <svg
      viewBox="336 168 1584 872"
      className="absolute inset-0 size-full"
      role="img"
      aria-label="Seat model"
    >
      <defs>
        <clipPath id="outerClip">
          <path d={outer} />
        </clipPath>
        <clipPath id="innerClip">
          <path d={inner} />
        </clipPath>
        <linearGradient id="panel" x1="0" x2="1" y1="0" y2="0">
          <stop offset="0" stopColor="#8793dc" />
          <stop offset=".5" stopColor="#95a3f2" />
          <stop offset="1" stopColor="#9eacfc" />
        </linearGradient>
        <linearGradient id="rim" x1=".3" x2=".7" y1="0" y2="1">
          <stop offset="0" stopColor="#747fc4" />
          <stop offset="1" stopColor="#97a4f0" />
        </linearGradient>
        <filter id="soft" x="-50%" y="-50%" width="200%" height="200%">
          <feGaussianBlur stdDeviation="7" />
        </filter>
        <filter id="wide" x="-100%" y="-100%" width="300%" height="300%">
          <feGaussianBlur stdDeviation="48" />
        </filter>
      </defs>
      <g transform="translate(740 230) scale(0.33333)" fill="none" strokeLinejoin="round">
        {/* underside seen past the right rail */}
        <path
          d="M1062 1640V1730H1042L1040 1770L1020 1820L985 1850L940 1925L880 2030L870 2015L1000 1780Z"
          fill="#5a64a5"
          stroke="#10142c"
          strokeWidth="3"
        />
        <path d={outer} fill="#9dabfa" />
        <g clipPath="url(#outerClip)">
          <g filter="url(#soft)">
            <path d={outer} stroke="#7581d2" strokeWidth="18" />
            <path d={inner} stroke="#7f8bde" strokeWidth="14" />
          </g>
          <g filter="url(#soft)" stroke="#d4dcff" strokeWidth="12" strokeLinecap="round">
            <path d={curve("378,440 382,475")} strokeWidth="18" />
            <path d={curve("850,66 930,68 1090,100")} strokeWidth="8" />
            <path d={curve("1180,135 1252,195 1295,262")} />
            <path d={curve("1272,595 1266,650")} strokeWidth="16" />
            <path d={curve("1200,1000 1160,1190 1120,1380")} />
            <path d={curve("520,960 505,1080 470,1210")} />
            <path d={curve("70,1920 66,1980")} strokeWidth="18" />
            <path d={curve("150,2125 190,2150 270,2172")} />
            <path d={curve("310,2170 400,2200")} />
            <path d={curve("430,2200 540,2222")} />
            <path d={curve("570,2225 690,2244")} />
            <path d={curve("848,2055 835,2115")} strokeWidth="16" />
          </g>
        </g>
        <path d={inner} fill="url(#panel)" />
        <g clipPath="url(#innerClip)">
          <g filter="url(#wide)">
            <path d="M380 400L560 310L590 470L450 590L380 560Z" fill="#656ea4" />
            <path d="M480 600L560 620L600 760L610 900L570 1160L440 1400L510 1100L530 900Z" fill="#6a75b6" />
            <path d="M400 1340L560 1280L590 1440L500 1620L380 1660L240 1700Z" fill="#656eaa" />
            <path d="M60 1880L240 1700L270 1900L180 2040L80 2060Z" fill="#4b537f" />
            <path d="M240 1690L360 1720L400 1860L300 1900Z" fill="#6771af" />
            <path d="M640 560L760 520L800 900L700 1080L640 900Z" fill="#8996e2" />
            <ellipse cx="690" cy="215" rx="36" ry="60" fill="#c6d1ff" />
            <ellipse cx="885" cy="1070" rx="100" ry="210" fill="#c3d0ff" transform="rotate(12 885 1070)" />
            <ellipse cx="920" cy="640" rx="90" ry="220" fill="#a5b4ff" />
            <ellipse cx="800" cy="1735" rx="110" ry="50" fill="#d9e1ff" transform="rotate(14 800 1735)" />
            <ellipse cx="860" cy="1570" rx="150" ry="50" fill="#8d9aec" />
          </g>
          <ellipse
            cx="812"
            cy="1740"
            rx="46"
            ry="15"
            fill="#fff"
            filter="url(#soft)"
            transform="rotate(14 812 1740)"
          />
        </g>
        <g stroke="#10142c" strokeWidth="3" shapeRendering="crispEdges">
          <path d={outer} />
          <path d={inner} />
          {edges.map((e) => (
            <path key={e} d={curve(e)} />
          ))}
        </g>
        {slots.map((s) => (
          <g key={s.rim} strokeWidth="3">
            <path d={curve(s.rim, true)} fill="url(#rim)" />
            <path d={curve(s.hole, true)} stroke="#5963a2" strokeWidth="10" filter="url(#soft)" />
            <path d={curve(s.shine)} stroke="#c9d3ff" strokeWidth="9" filter="url(#soft)" />
            <g stroke="#10142c" shapeRendering="crispEdges">
              <path d={curve(s.rim, true)} />
              <path d={curve(s.hole, true)} fill="#e8eaed" />
              {s.ticks.map((t) => (
                <path key={t} d={curve(t)} />
              ))}
            </g>
          </g>
        ))}
      </g>
      {/* pointer */}
      <path d="M761.500 375.500v16l4-3.500 3 6.500 2.500-1-3-6.500h5z" fill="#fff" stroke="#333" />
    </svg>
  );
}

const viewTools = [
  ["refit", "Refit"],
  ["zoomIn", "Zoom In"],
  ["zoomOut", "Zoom Out"],
  ["repaint", "Repaint"],
  ["shading", "Rendering Options"],
  ["display", "Display Style"],
  ["orient", "Saved Orientations"],
  ["viewMgr", "View Manager"],
  ["perspective", "Perspective View"],
  ["sectionView", "Section View"],
  ["datumDisplay", "Datum Display Filters"],
  ["annotation", "Annotation Display"],
  ["spin", "Spin Center"],
  ["sim", "Simulation"],
  ["pause", "Pause Simulation"],
  ["simEnd", "Simulation Display"],
];

function GraphicsArea() {
  return (
    <main className="relative flex-1 bg-[#e8eaed]">
      <SeatModel />
      <div className="relative flex justify-center pt-2">
        <div className="flex h-[33px] border border-[#a5a9ac] bg-[#f8f9fb] px-0.5">
          {viewTools.map(([icon, label]) => (
            <button key={icon} aria-label={label} className="flex w-[26px] items-center justify-center">
              <Icon name={icon} />
            </button>
          ))}
        </div>
      </div>
    </main>
  );
}

function StatusBar() {
  return (
    <footer className="flex h-10 shrink-0 items-center border-t-2 border-[#c5cad0] bg-[#f8faf9] text-[#3f4346]">
      <button
        aria-label="Navigator"
        className="ml-[6px] flex h-[25px] w-[22px] items-center justify-center border border-[#a9adaf] bg-[#dcdfe0]"
      >
        <Icon name="navigator" />
      </button>
      <button aria-label="Browser" className="ml-[7px]">
        <Icon name="globe" />
      </button>
      <button aria-label="Full screen" className="ml-[10px]">
        <Icon name="blank" />
      </button>
      <span className="ml-3 h-6 w-px bg-[#a9adaf]" />
      <p className="flex items-center gap-[5px] pb-1.5 pl-[6px]">
        <span className="size-[5px] rounded-full bg-[#155f93]" />
        SEAT-CRV-PNT-DIR regeneration completed successfully.
      </p>

      <div className="ml-auto flex items-center gap-[2px] pr-[90px]">
        <span className="mr-0.5 h-8 w-px bg-[#a9adaf]" />
        <span className="h-8 w-px bg-[#a9adaf]" />
        <div className="mb-1 flex h-[25px] border border-[#b9bcbe] bg-[#fbfcfc]">
          <button aria-label="Find" className="flex w-[27px] items-center justify-center">
            <Icon name="binoculars" />
          </button>
          <button aria-label="Find options" className="flex w-[14px] items-center justify-center border-l border-[#b9bcbe]">
            <Caret />
          </button>
        </div>
        <span className="h-8 w-px bg-[#a9adaf]" />
      </div>
      <div className="relative mr-[18px] h-6 w-[165px]">
        <select
          aria-label="Selection filter"
          className="h-6 w-full appearance-none border border-[#a9adaf] bg-[#f7f7f8] pl-[7px] text-[11px]"
        >
          <option>Geometry</option>
        </select>
        <span className="pointer-events-none absolute top-0 right-0 flex h-6 w-4 items-center justify-center border-l border-[#a9adaf]">
          <Caret />
        </span>
      </div>
    </footer>
  );
}

export default function App() {
  return (
    <div className="flex h-screen flex-col overflow-hidden bg-[#e8eaed] font-['Open_Sans',sans-serif] text-[11px] leading-4">
      <TitleBar />
      <TabBar />
      <Ribbon />
      <div className="flex min-h-0 flex-1">
        <ModelTree />
        <GraphicsArea />
      </div>
      <StatusBar />
    </div>
  );
}
